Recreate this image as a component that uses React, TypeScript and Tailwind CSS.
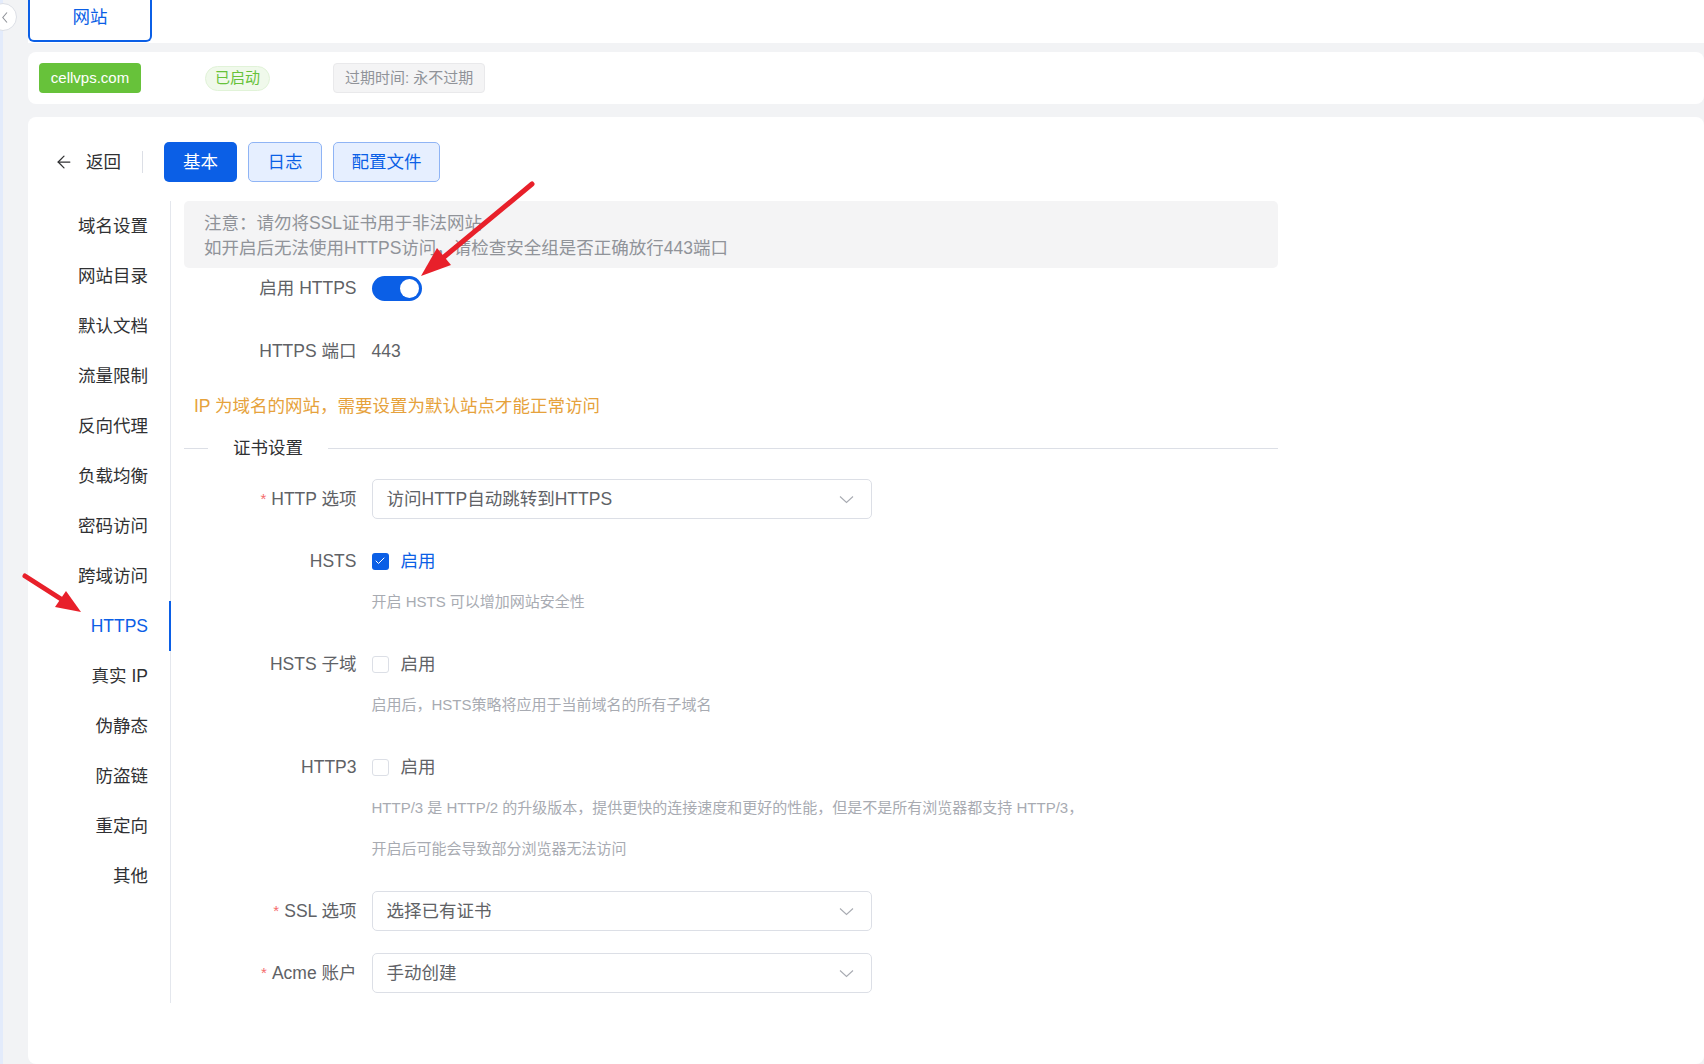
import { ArrowLeft, Check } from "lucide-react";

// site settings page: HTTPS tab of the "网站" panel

const FONT = "font-['Liberation_Sans','Noto_Sans_CJK_SC',sans-serif]";

const menu = [
  "域名设置",
  "网站目录",
  "默认文档",
  "流量限制",
  "反向代理",
  "负载均衡",
  "密码访问",
  "跨域访问",
  "HTTPS",
  "真实 IP",
  "伪静态",
  "防盗链",
  "重定向",
  "其他",
];

function Label({ text, required }: { text: string; required?: boolean }) {
  return (
    <div className="w-[187.5px] shrink-0 pr-[15px] flex items-center justify-end text-[17.5px] text-[#606266]">
      {required && <span className="text-[#f56c6c] mr-[5px] text-[15px]">*</span>}
      {text}
    </div>
  );
}

function Select({ value }: { value: string }) {
  return (
    <div className="w-[500px] h-[40px] border border-[#dcdfe6] rounded-[5px] flex items-center justify-between pl-[14px] pr-[17px] text-[17.5px] text-[#606266]">
      <span>{value}</span>
      <svg width="15" height="9" viewBox="0 0 15 9" fill="none">
        <polyline points="1,1.5 7.5,7.5 14,1.5" stroke="#a8abb2" strokeWidth="1.1" />
      </svg>
    </div>
  );
}

function Checkbox({ checked }: { checked?: boolean }) {
  return (
    <div className="flex items-center gap-[12px]">
      {checked ? (
        <span className="w-[17px] h-[17px] rounded-[3px] bg-[#0b5fe6] flex items-center justify-center">
          <Check size={12} strokeWidth={2} className="text-white" />
        </span>
      ) : (
        <span className="w-[17px] h-[17px] rounded-[3px] border border-[#dcdfe6] bg-white" />
      )}
      <span className={`text-[17.5px] ${checked ? "text-[#0b5fe6]" : "text-[#606266]"}`}>启用</span>
    </div>
  );
}

function Helper({ lines }: { lines: string[] }) {
  return (
    <div className="pl-[187.5px] text-[15px] text-[#a8abb2]">
      {lines.map((l) => (
        <div key={l} className="h-[41px] leading-[41px]">
          {l}
        </div>
      ))}
    </div>
  );
}

export default function App() {
  return (
    <div className={`relative min-h-[1064px] bg-[#f2f3f5] flex ${FONT} overflow-hidden`}>
      {/* left edge strip */}
      <div className="w-[3px] shrink-0 bg-[#e3ebfb]" />

      <div className="ml-[25px] flex-1 flex flex-col">
        {/* tab header */}
        <div className="h-[43px] bg-white flex">
          <div className="w-[124px] h-[42px] border-2 border-t-0 border-[#0b5fe6] rounded-b-[6px] flex justify-center pt-[4px] leading-[26px] text-[17.5px] text-[#0b5fe6]">
            网站
          </div>
        </div>

        {/* site info */}
        <div className="mt-[9px] h-[52px] bg-white rounded-[8px] flex items-center pl-[11px]">
          <span className="h-[30px] w-[102px] rounded-[4px] bg-[#67c23a] text-white text-[15px] flex items-center justify-center">
            cellvps.com
          </span>
          <span className="ml-[64px] h-[25px] px-[9px] rounded-full bg-[#f0f9eb] border border-[#e1f3d8] text-[#67c23a] text-[15px] flex items-center">
            已启动
          </span>
          <span className="ml-[63px] h-[30px] px-[11px] rounded-[4px] bg-[#f4f4f5] border border-[#e9e9eb] text-[#909399] text-[15px] flex items-center">
            过期时间: 永不过期
          </span>
        </div>

        {/* main card */}
        <div className="mt-[13px] flex-1 bg-white rounded-[8px] pt-[25px]">
          <div className="h-[40px] flex items-center pl-[26px]">
            <ArrowLeft size={20} strokeWidth={1.5} className="text-[#303133]" />
            <span className="ml-[12px] text-[17.5px] text-[#303133]">返回</span>
            <span className="ml-[21px] w-px h-[22px] bg-[#dcdfe6]" />
            <div className="ml-[21px] flex gap-[11px]">
              <button className="h-[40px] w-[73px] rounded-[5px] bg-[#0b5fe6] text-white text-[17.5px]">基本</button>
              <button className="h-[40px] w-[74px] rounded-[5px] bg-[#e6efff] border border-[#8fb4f5] text-[#0b5fe6] text-[17.5px]">
                日志
              </button>
              <button className="h-[40px] w-[107px] rounded-[5px] bg-[#e6efff] border border-[#8fb4f5] text-[#0b5fe6] text-[17.5px]">
                配置文件
              </button>
            </div>
          </div>

          <div className="mt-[19px] flex">
            {/* side menu */}
            <div className="w-[143px] shrink-0 border-r border-[#e4e7ed]">
              {menu.map((m) => (
                <div
                  key={m}
                  className={`h-[50px] -mr-px pr-[21px] flex items-center justify-end text-[17.5px] border-r-2 ${
                    m === "HTTPS" ? "text-[#0b5fe6] border-[#0b5fe6]" : "text-[#303133] border-transparent"
                  }`}
                >
                  {m}
                </div>
              ))}
            </div>

            {/* form */}
            <div className="pl-[13px] w-[1107px] pb-[10px]">
              <div className="h-[67px] rounded-[5px] bg-[#f4f4f5] px-[20px] pt-[10px] text-[17.5px] leading-[24.5px] text-[#909399]">
                <div>注意：请勿将SSL证书用于非法网站</div>
                <div>如开启后无法使用HTTPS访问，请检查安全组是否正确放行443端口</div>
              </div>

              <div className="h-[40px] flex mb-[23px]">
                <Label text="启用 HTTPS" />
                <div className="flex items-center">
                  <span className="w-[50px] h-[25px] rounded-full bg-[#0b5fe6] flex items-center justify-end pr-[3px]">
                    <span className="w-[19px] h-[19px] rounded-full bg-white" />
                  </span>
                </div>
              </div>

              <div className="h-[40px] flex mb-[22px]">
                <Label text="HTTPS 端口" />
                <div className="flex items-center text-[17.5px] text-[#606266]">443</div>
              </div>

              <div className="h-[26px] pl-[10px] text-[17.5px] leading-[26px] text-[#e6a23c]">
                IP 为域名的网站，需要设置为默认站点才能正常访问
              </div>

              <div className="mt-[18px] mb-[20px] h-[22px] flex items-center">
                <span className="w-[24px] h-px bg-[#dcdfe6]" />
                <span className="px-[25px] text-[17.5px] text-[#303133]">证书设置</span>
                <span className="flex-1 h-px bg-[#dcdfe6]" />
              </div>

              <div className="h-[40px] flex mb-[22px]">
                <Label text="HTTP 选项" required />
                <Select value="访问HTTP自动跳转到HTTPS" />
              </div>

              <div className="h-[40px] flex">
                <Label text="HSTS" />
                <Checkbox checked />
              </div>
              <div className="mb-[22px]">
                <Helper lines={["开启 HSTS 可以增加网站安全性"]} />
              </div>

              <div className="h-[40px] flex">
                <Label text="HSTS 子域" />
                <Checkbox />
              </div>
              <div className="mb-[22px]">
                <Helper lines={["启用后，HSTS策略将应用于当前域名的所有子域名"]} />
              </div>

              <div className="h-[40px] flex">
                <Label text="HTTP3" />
                <Checkbox />
              </div>
              <div className="mb-[22px]">
                <Helper
                  lines={[
                    "HTTP/3 是 HTTP/2 的升级版本，提供更快的连接速度和更好的性能，但是不是所有浏览器都支持 HTTP/3，",
                    "开启后可能会导致部分浏览器无法访问",
                  ]}
                />
              </div>

              <div className="h-[40px] flex mb-[22px]">
                <Label text="SSL 选项" required />
                <Select value="选择已有证书" />
              </div>

              <div className="h-[40px] flex">
                <Label text="Acme 账户" required />
                <Select value="手动创建" />
              </div>
            </div>
          </div>
        </div>
      </div>

      {/* collapse button, partly off screen */}
      <div className="absolute left-[-11px] top-[3px] w-[28px] h-[28px] rounded-full bg-white border border-[#dcdfe6] flex items-center pl-[12px]">
        <svg width="6" height="11" viewBox="0 0 6 11" fill="none">
          <polyline points="5,0.5 0.8,5.5 5,10.5" stroke="#909399" strokeWidth="1.1" />
        </svg>
      </div>

      {/* red annotation arrows */}
      <svg className="absolute left-0 top-0 pointer-events-none" width={1704} height={1064}>
        <line x1={532} y1={184} x2={444} y2={257} stroke="#e8202a" strokeWidth={5} strokeLinecap="round" />
        <polygon points="421,276 451,265 437,248" fill="#e8202a" />
        <line x1={25} y1={576} x2={61} y2={599} stroke="#e8202a" strokeWidth={5} strokeLinecap="round" />
        <polygon points="81,612 55,607 66,591" fill="#e8202a" />
      </svg>
    </div>
  );
}
